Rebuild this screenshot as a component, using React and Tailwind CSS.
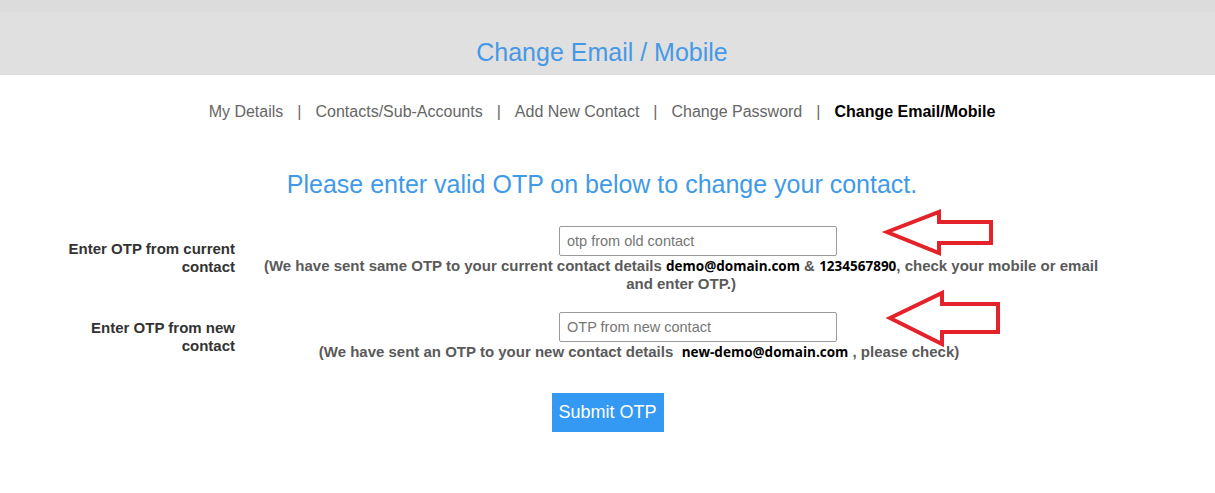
import { useState } from "react";

const navItems = ["My Details", "Contacts/Sub-Accounts", "Add New Contact", "Change Password"];

// red outline arrows pasted over the screenshot
const Arrow = ({ points }) => (
  <polygon points={points} fill="white" stroke="#e3222a" strokeWidth="4" strokeLinejoin="miter" />
);

const App = () => {
  const [oldOtp, setOldOtp] = useState("");
  const [newOtp, setNewOtp] = useState("");

  return (
    <div className="relative w-[1215px] h-[493px] bg-white font-['Liberation_Sans',Arial,sans-serif] overflow-hidden">
      {/* Header band */}
      <div className="h-[75px] bg-[#e0e0e0] flex flex-col">
        <div className="h-[12px] bg-[#dcdcdc]" />
        <div className="pt-[26px] pr-[11px] text-center text-[25px] leading-[28px] text-[#4599e6]">
          Change Email / Mobile
        </div>
      </div>

      {/* Tabs */}
      <div className="mt-[27px] pr-[11px] flex justify-center text-[16px] leading-[20px] text-[#666]">
        {navItems.map((item) => (
          <span key={item} className="flex">
            <span>{item}</span>
            <span className="mx-[14px]">|</span>
          </span>
        ))}
        <span className="font-bold text-black">Change Email/Mobile</span>
      </div>

      {/* Heading */}
      <div className="mt-[48px] pr-[11px] text-center text-[25px] leading-[28px] text-[#3f9ae8]">
        Please enter valid OTP on below to change your contact.
      </div>

      {/* Row 1 */}
      <div className="mt-[28px] flex">
        <div className="w-[235px] pt-[14px] text-right text-[15px] leading-[18px] font-bold text-[#333]">
          Enter OTP from current
          <br />
          contact
        </div>
        <div className="w-[862px] ml-[15px] flex flex-col">
          <input
            value={oldOtp}
            onChange={(e) => setOldOtp(e.target.value)}
            placeholder="otp from old contact"
            className="ml-[309px] w-[278px] h-[30px] border border-[#9a9a9a] rounded-[2px] px-[7px] text-[14.5px] text-[#333] placeholder:text-[#767676] outline-none"
          />
          <div className="mt-px text-center text-[15px] leading-[17px] font-bold text-[#5a5a5a]">
            (We have sent same OTP to your current contact details{" "}
            <span className="font-['Open_Sans',sans-serif] font-bold text-[13.5px] text-black">demo@domain.com</span> &amp;{" "}
            <span className="font-['Open_Sans',sans-serif] font-bold text-[13.5px] text-black">1234567890</span>, check your mobile or email
            and enter OTP.)
          </div>
        </div>
      </div>

      {/* Row 2 */}
      <div className="mt-[20px] flex">
        <div className="w-[235px] pt-[7px] text-right text-[15px] leading-[18px] font-bold text-[#333]">
          Enter OTP from new
          <br />
          contact
        </div>
        <div className="w-[778px] ml-[15px] flex flex-col">
          <input
            value={newOtp}
            onChange={(e) => setNewOtp(e.target.value)}
            placeholder="OTP from new contact"
            className="ml-[309px] w-[278px] h-[30px] border border-[#9a9a9a] rounded-[2px] px-[7px] text-[14.5px] text-[#333] placeholder:text-[#767676] outline-none"
          />
          <div className="mt-px text-center text-[15px] leading-[17px] font-bold text-[#5a5a5a]">
            (We have sent an OTP to your new contact details&nbsp;{" "}
            <span className="font-['Open_Sans',sans-serif] font-bold text-[13.5px] text-black">new-demo@domain.com</span> , please check)
          </div>
        </div>
      </div>

      {/* Submit */}
      <div className="mt-[32px] flex justify-center">
        <button className="w-[112px] h-[39px] bg-[#3399f3] text-white text-[18px]">Submit OTP</button>
      </div>

      <svg className="absolute left-0 top-0 pointer-events-none" width="1215" height="493">
        <Arrow points="887,232 939,212 939,222 991,222 991,243 939,243 939,253" />
        <Arrow points="890,318 942,293 942,304 998,304 998,332 942,332 942,344" />
      </svg>
    </div>
  );
};

export default App;
